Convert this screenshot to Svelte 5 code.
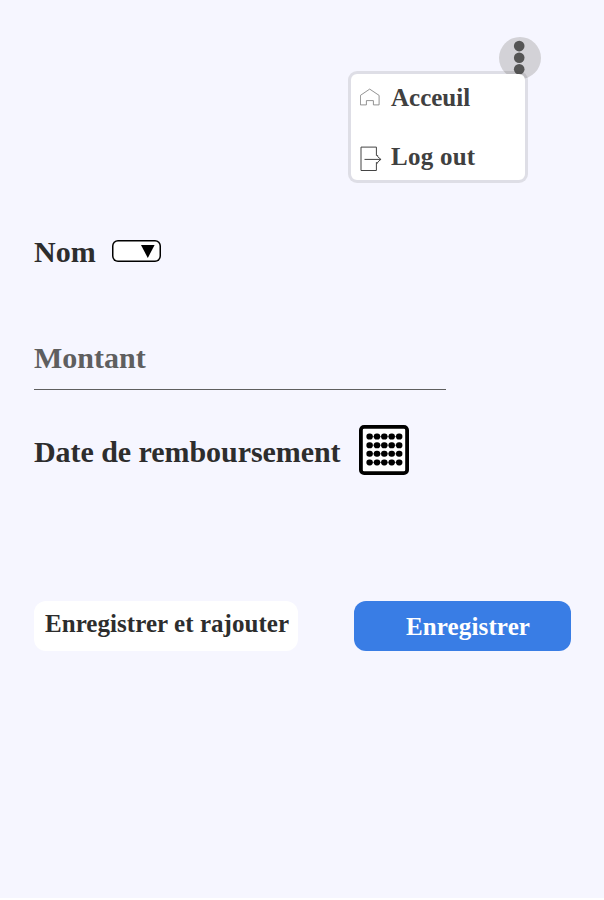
<script>
  const menu = [
    { label: 'Acceuil', icon: 'home' },
    { label: 'Log out', icon: 'logout' }
  ];
  const rows = [11.6, 20.2, 28.8, 37.4];
  const cols = [10.6, 18, 25.3, 32.7, 40.2];
</script>

<main>
  <header>
    <button class="dots" aria-label="Menu">
      <svg width="42" height="42" viewBox="0 0 42 42" fill="#555">
        <circle cx="20.2" cy="9.1" r="5.3" />
        <circle cx="20.2" cy="20.7" r="5.3" />
        <circle cx="20.2" cy="32.3" r="5.3" />
      </svg>
    </button>
    <nav>
      {#each menu as item}
        <a href="#{item.icon}">
          {#if item.icon === 'home'}
            <svg width="30" height="28" viewBox="0 0 30 28" fill="none" stroke="#777" stroke-width=".8">
              <path d="M.4 20.9V11.4L9.7 5.1l9.4 6.3v9.5h-5.7v-4.3H6.4v4.3z" />
            </svg>
          {:else}
            <svg width="30" height="28" viewBox="0 0 30 28" fill="none" stroke="#444" stroke-width="1">
              <path d="M16.4 12.5V4.1H1v23.4h15.4v-8.3M4.5 16.4h16.6M16.4 12.5h1.3v1.2l3.2 2.7-3.2 2.7v1h-1.3" />
            </svg>
          {/if}
          <span class={item.icon}>{item.label}</span>
        </a>
      {/each}
    </nav>
  </header>

  <form>
    <div class="row name">
      <span>Nom</span>
      <button type="button" class="select" aria-label="Nom">
        <svg width="14" height="13" viewBox="0 0 14 13"><path d="M0 0h13.6L6.8 13z" /></svg>
      </button>
    </div>
    <div class="amount">Montant</div>
    <div class="row date">
      <span>Date de remboursement</span>
      <svg width="50" height="50" viewBox="0 0 50 50">
        <rect x="1.9" y="1.9" width="46.2" height="46.2" rx="3.2" fill="#fff" stroke="#000" stroke-width="3.8" />
        {#each rows as y}
          <path d="M10 {y}h30" stroke="#777" stroke-width="1" />
          {#each cols as x}
            <rect x={x - 3.2} y={y - 3} width="6.4" height="6" rx="2.8" />
          {/each}
        {/each}
      </svg>
    </div>
    <div class="actions">
      <button type="button" class="again">Enregistrer et rajouter</button>
      <button type="button" class="save">Enregistrer</button>
    </div>
  </form>
</main>

<style>
  :global(body) { margin: 0; background: #fff; }
  main {
    box-sizing: border-box;
    height: 898px;
    padding: 37px 33px 0 34px;
    background: #f6f6ff;
    font: bold 30px/34px "Liberation Serif", "Times New Roman", serif;
    color: #2d2d2d;
  }
  svg { display: block; flex: none; }
  button { font: inherit; color: inherit; border: 0; padding: 0; margin: 0; }
  header { position: relative; height: 146px; }
  .dots {
    position: absolute;
    left: 465px;
    top: 0;
    width: 42px;
    height: 42px;
    border-radius: 50%;
    background: #d3d2d7;
  }
  nav {
    position: absolute;
    left: 314px;
    top: 34px;
    box-sizing: border-box;
    width: 180px;
    height: 112px;
    padding: 10px 9px;
    display: flex;
    flex-direction: column;
    gap: 31px;
    border: 3px solid rgba(60, 60, 60, .13);
    border-radius: 9px;
    background: #fff padding-box;
  }
  nav a {
    display: flex;
    gap: 1px;
    font-size: 25px;
    line-height: 28px;
    color: #404040;
    text-decoration: none;
  }
  .logout { letter-spacing: .25px; }
  .row { display: flex; align-items: center; }
  .name { margin-top: 52px; gap: 16px; height: 34px; }
  .select {
    display: flex;
    align-items: flex-start;
    box-sizing: border-box;
    width: 49px;
    height: 22px;
    margin-top: -2px;
    padding: 5px 0 0 29px;
    border-radius: 6px;
    background: #fff;
    box-shadow: inset 0 0 0 1.5px #000;
  }
  .amount {
    box-sizing: border-box;
    width: 412px;
    height: 49px;
    margin-top: 72px;
    border-bottom: 1px solid #5f5f5f;
    color: #5f5f5f;
  }
  .date { margin-top: 35px; gap: 18px; height: 50px; }
  .date span { padding-top: 4px; letter-spacing: -.055px; }
  .actions { display: flex; justify-content: space-between; margin-top: 126px; }
  .actions button {
    display: flex;
    box-sizing: border-box;
    height: 50px;
    border-radius: 12px;
    font-size: 25px;
    line-height: 28px;
    white-space: nowrap;
  }
  .actions .again { width: 264px; padding: 9px 0 0 11px; background: #fff; letter-spacing: .05px; }
  .actions .save { width: 217px; padding: 12px 0 0 52px; background: #397de5; color: #fff; letter-spacing: .13px; }
</style>
